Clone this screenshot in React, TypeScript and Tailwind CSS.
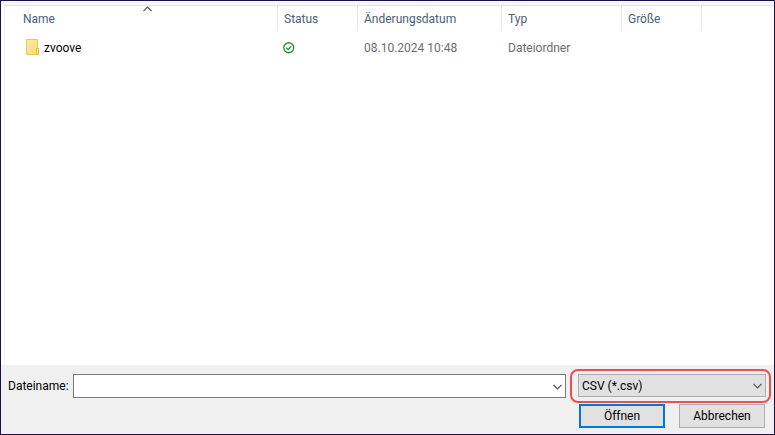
import { ReactNode } from 'react';

const files = [
  { name: 'zvoove', modified: '08.10.2024 10:48', type: 'Dateiordner', size: '' },
];

function FolderIcon() {
  return (
    <svg width="14" height="16" viewBox="0 0 14 16" aria-hidden="true" className="mb-[2px] shrink-0">
      <defs>
        <linearGradient id="folder" x1="0" y1="0" x2="1" y2="1">
          <stop offset="0" stopColor="#ffe9a2" />
          <stop offset="1" stopColor="#fbdc7c" />
        </linearGradient>
      </defs>
      <path d="M0.5 0.5H11.5V15.5H0.5Z" fill="url(#folder)" stroke="#ecca55" />
      <path d="M10.5 9.5H12.5V15.5H10.5Z" fill="#ffe69a" stroke="#e6bf45" />
    </svg>
  );
}

function SyncedIcon() {
  return (
    <svg width="12" height="12" viewBox="0 0 12 12" fill="none" role="img" aria-label="Synchronisiert">
      <circle cx="5.75" cy="5.75" r="5" stroke="#1f8f35" strokeWidth="1.3" />
      <path d="M3.2 5.8L5.1 7.6L8.3 4.2" stroke="#1f8f35" strokeWidth="1.2" />
    </svg>
  );
}

function Chevron({ className = '' }: { className?: string }) {
  return (
    <svg width="9" height="6" viewBox="0 0 9 6" fill="none" aria-hidden="true" className={className}>
      <path d="M0.5 0.8L4.5 4.8L8.5 0.8" stroke="#505050" strokeWidth="1.2" />
    </svg>
  );
}

function HeaderCell({ children, first = false }: { children: ReactNode; first?: boolean }) {
  return (
    <th
      scope="col"
      className={
        'relative h-[25px] border-r border-[#e5e5e5] pt-px text-left font-normal text-[#4c607a] ' +
        (first ? 'pl-[18px]' : 'pl-[6px]')
      }
    >
      {children}
    </th>
  );
}

export default function App() {
  return (
    <div className="flex min-h-screen flex-col border border-[#1d1147] bg-white font-['Roboto','Noto_Sans',sans-serif] text-[12px] leading-4 text-black">
      <div className="h-1 bg-[#f5f6f9]" />
      <main className="ml-[3px] flex-1 border-t border-l border-t-[#e5e5e5] border-l-[#f2f2f5]">
        <table className="w-full table-fixed border-separate border-spacing-0">
          <colgroup>
            <col className="w-[273px]" />
            <col className="w-[80px]" />
            <col className="w-[144px]" />
            <col className="w-[120px]" />
            <col className="w-[80px]" />
            <col />
          </colgroup>
          <thead>
            <tr>
              <HeaderCell first>
                Name
                <Chevron className="absolute top-0 left-[138px] rotate-180" />
              </HeaderCell>
              <HeaderCell>Status</HeaderCell>
              <HeaderCell>Änderungsdatum</HeaderCell>
              <HeaderCell>Typ</HeaderCell>
              <HeaderCell>Größe</HeaderCell>
              <td />
            </tr>
          </thead>
          <tbody className="text-[#6d6d6d]">
            {files.map((file) => (
              <tr key={file.name} className="h-[34px]">
                <td className="pl-[21px] text-black">
                  <div className="flex items-center gap-1">
                    <FolderIcon />
                    {file.name}
                  </div>
                </td>
                <td className="pl-[5px]">
                  <SyncedIcon />
                </td>
                <td className="pl-[6px]">{file.modified}</td>
                <td className="pl-[6px]">{file.type}</td>
                <td className="pl-[6px]">{file.size}</td>
                <td />
              </tr>
            ))}
          </tbody>
        </table>
      </main>

      <footer className="bg-[#f0f0f0] pt-1 pb-[6px]">
        <div className="flex items-center pr-[3px] pl-[7px]">
          <label htmlFor="filename" className="w-[65px] whitespace-nowrap">
            Dateiname:
          </label>
          <div className="relative mr-1 flex-1">
            <input
              id="filename"
              type="text"
              className="block h-6 w-full border border-[#7a7a7a] bg-white pr-5 pl-1 outline-none"
            />
            <Chevron className="pointer-events-none absolute top-[10px] right-1" />
          </div>
          <div className="relative w-[201px] rounded-lg border-2 border-[#e9504f] pt-[3px] pr-[3px] pb-1 pl-[6px]">
            <select
              aria-label="Dateityp"
              className="block h-[23px] w-full appearance-none border border-[#adadad] bg-[#e1e1e1] pr-5 pl-[3px] outline-none"
            >
              <option>CSV (*.csv)</option>
            </select>
            <Chevron className="pointer-events-none absolute top-3 right-[7px]" />
          </div>
        </div>
        <div className="mt-px flex justify-end gap-[14px] pr-[9px]">
          <button type="button" className="h-6 w-[86px] border-2 border-[#0078d7] bg-[#e1e1e1]">
            Öffnen
          </button>
          <button type="button" className="h-6 w-[86px] border border-[#adadad] bg-[#e1e1e1]">
            Abbrechen
          </button>
        </div>
      </footer>
    </div>
  );
}
